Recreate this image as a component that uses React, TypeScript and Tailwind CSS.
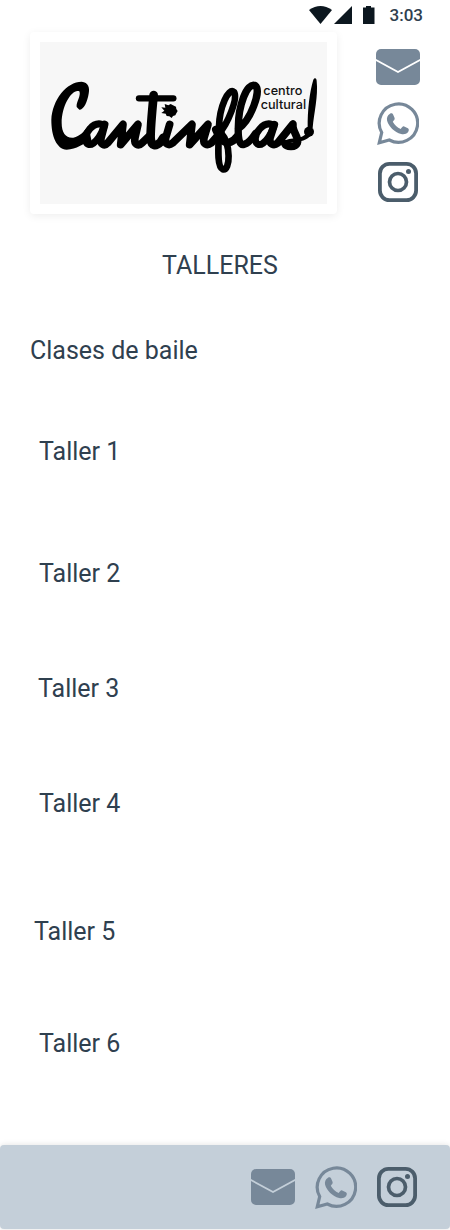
import React from "react";

const workshops = [
  { name: "Taller 1", spacing: "mt-[69px] pl-[39px]" },
  { name: "Taller 2", spacing: "mt-[90px] pl-[39px]" },
  { name: "Taller 3", spacing: "mt-[83px] pl-[38px]" },
  { name: "Taller 4", spacing: "mt-[83px] pl-[39px]" },
  { name: "Taller 5", spacing: "mt-[96px] pl-[34px]" },
  { name: "Taller 6", spacing: "mt-[80px] pl-[39px]" },
];

function MailIcon() {
  return (
    <svg viewBox="0 0 44 36" className="h-9 w-11" fill="#778899" aria-hidden="true">
      <path d="M5 0h34a5 5 0 0 1 5 5v5L22 22 0 10V5a5 5 0 0 1 5-5Z" />
      <path d="M0 12 22 24 44 12V31a5 5 0 0 1-5 5H5a5 5 0 0 1-5-5Z" />
    </svg>
  );
}

function WhatsAppIcon() {
  return (
    <svg viewBox="0 0 42 43" className="h-[43px] w-[42px]" aria-hidden="true">
      <path
        d="M2.300 40.700 4.700 30.500A19.200 19.200 0 1 1 12.300 38Z"
        fill="none"
        stroke="#778899"
        strokeWidth="3.200"
      />
      <path
        d="M13 11.700c1.200-.6 2.500-.5 3.100.8l1.500 3.600c.5 1.400-.9 2.500-1.800 3.600 1.700 3.300 4.500 5.800 7.900 7.200 1.100-1.100 2-3 3.500-2.500l3.700 1.800c1.400.7 1 2.500.2 3.700-1.500 2.200-4.500 2.600-7 2-6.700-1.700-12.300-7.300-14-13.200-.7-2.700.4-5.800 2.900-7Z"
        fill="#778899"
      />
    </svg>
  );
}

function InstagramIcon() {
  return (
    <svg viewBox="0 0 40 40" className="size-10" fill="none" stroke="#4b5d6b" aria-hidden="true">
      <rect x="1.900" y="1.900" width="36.200" height="36.200" rx="9.500" strokeWidth="3.800" />
      <circle cx="20" cy="20" r="8.500" strokeWidth="3.700" />
      <circle cx="30.500" cy="9.500" r="2.500" fill="#4b5d6b" stroke="none" />
    </svg>
  );
}

function ContactLinks() {
  return (
    <>
      <a href="#correo" aria-label="Correo"><MailIcon /></a>
      <a href="#whatsapp" aria-label="WhatsApp"><WhatsAppIcon /></a>
      <a href="#instagram" aria-label="Instagram"><InstagramIcon /></a>
    </>
  );
}

function Logo() {
  return (
    <svg viewBox="60 67 861 486" className="block w-full bg-[#f7f7f7]" role="img" aria-label="Cantinflas centro cultural">
      <path d="M170 262C168 248 184 228 178 215C158 205 125 255 125 310C125 340 138 356 160 354C180 350 192 335 205 318L215 365C190 370 170 390 140 390C110 388 94 350 94 300C97 240 140 186 185 186C205 187 210 205 206 222C202 245 192 270 178 270Z" />
      <g fill="none" stroke="#000" strokeLinecap="round" strokeLinejoin="round" strokeWidth="21">
        <path d="M246 314C218 306 192 342 198 365C205 387 233 371 252 322" />
        <path strokeWidth="23" d="M254 314L243 356C240 376 254 380 263 370L309 314L302 375L354 314L345 354C341 376 356 380 366 370L391 346" />
        <path strokeWidth="26" d="M401 226C397 267 391 330 392 356C394 381 408 381 422 367L430 354" />
        <path strokeWidth="19" d="M357 236H460" />
        <path strokeWidth="23" d="M449 314L437 355C434 374 446 379 458 370L516 314L509 375L564 314L552 355C548 375 562 379 574 370L602 338" />
        <path strokeWidth="20" d="M598 340C622 314 655 236 642 217C625 203 598 263 597 322C597 365 588 440 608 449C632 455 633 373 603 340" />
        <path strokeWidth="24" d="M588 330L601 357C620 375 636 371 650 352" />
        <path strokeWidth="22" d="M655 327C692 302 725 212 706 198C680 186 655 261 655 321C653 365 661 378 673 374C686 370 698 355 707 341" />
        <path d="M755 314C729 306 701 342 707 365C714 387 742 371 761 322" />
        <path strokeWidth="23" d="M763 315L750 355C747 375 762 379 773 370L819 313C815 335 839 354 832 370C825 386 799 381 795 373" />
        <path strokeWidth="12" d="M790 372C806 355 849 372 873 337" />
      </g>
      <path d="M424 263L436 264L434 253L445 257L452 253L459 257L468 261L469 268L473 274L469 281L466 287L459 289L455 295L448 290L440 289L437 282L424 280L433 273Z" />
      <path d="M880 180C885 172 890 176 890 184C895 230 882 279 878 325L863 325C862 274 869 214 880 180Z" />
      <circle cx="867" cy="336" r="15" />
      <g fontFamily="Inter, Roboto, sans-serif" fontSize="38" fontWeight="500" fill="#111">
        <text x="730" y="226">centro</text>
        <text x="722" y="269">cultural</text>
      </g>
    </svg>
  );
}

export default function App() {
  return (
    <div className="flex min-h-screen flex-col bg-white pb-px font-['Roboto','Noto_Sans',sans-serif] text-[25px] leading-8 text-[#2f404f]">
      <div className="flex h-8 items-start justify-end pr-[27px] pt-[5px]">
        <svg viewBox="0 0 66 19" className="mr-[15px] mt-px h-[19px] w-[66px]" fill="#0c171f" aria-hidden="true">
          <path d="M0 4Q11.500-4 23 4L11.500 18Z" />
          <path d="M43 0V18H25Z" />
          <path d="M54 1.500H57V0H62V1.500H65.500V18H54Z" />
        </svg>
        <span className="text-[17px] font-medium leading-5">3:03</span>
      </div>

      <header className="flex items-start justify-between px-[30px]">
        <div className="w-[307px] rounded-sm bg-white p-[10px] shadow-[0_2px_8px_rgba(0,0,0,0.07)]">
          <Logo />
        </div>
        <nav aria-label="Contacto" className="flex flex-col items-center gap-[17px] pt-[17px]">
          <ContactLinks />
        </nav>
      </header>

      <main className="flex-1 pb-[85px]">
        <h1 className="mt-9 pr-[10px] text-center">TALLERES</h1>
        <h2 className="mt-[53px] pl-[30px]">Clases de baile</h2>
        <ul>
          {workshops.map(({ name, spacing }) => (
            <li key={name} className={spacing}>{name}</li>
          ))}
        </ul>
      </main>

      <footer className="flex h-[84px] items-center justify-end gap-5 rounded-[4px] bg-[#c4cfd9] pr-[33px] shadow-[0_0_6px_rgba(0,0,0,0.12)]">
        <ContactLinks />
      </footer>
    </div>
  );
}
